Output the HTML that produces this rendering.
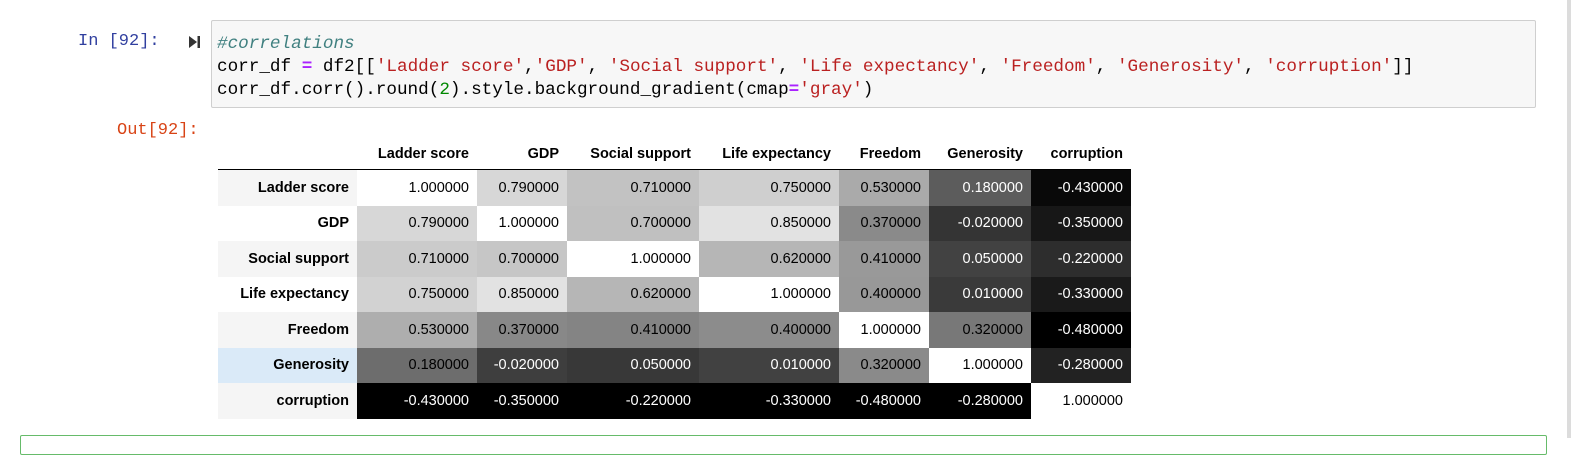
<!DOCTYPE html>
<html><head><meta charset="utf-8"><style>
body{margin:0;width:1571px;height:438px;overflow:hidden;background:#fff;position:relative;font-family:"Liberation Sans",Arial,sans-serif;}
.pr{position:absolute;font-family:"Liberation Mono",monospace;font-size:17px;}
.code{position:absolute;left:211px;top:20px;width:1325px;height:88px;background:#f7f7f7;border:1px solid #cfcfcf;border-radius:2px;box-sizing:border-box;}
.code pre{margin:0;position:absolute;left:5px;top:12px;font-family:"Liberation Mono",monospace;font-size:17.65px;line-height:23px;color:#000;letter-spacing:0}
.cm{color:#408080;font-style:italic}.s{color:#ba2121}.o{color:#aa22ff;font-weight:bold}.n{color:#080}
table{position:absolute;left:218px;top:138px;border-collapse:collapse;font-size:14.5px;}
th,td{padding:0 8px 0 0;text-align:right;height:35.5px;white-space:nowrap}
thead th{height:31px;border-bottom:1px solid #000;font-weight:bold;vertical-align:middle}
tbody th{font-weight:bold}
tr.odd th{background:#f5f5f5}
tr.hv th{background:#daeaf8}
.w{color:#fff}
</style></head><body>
<div class="pr" style="left:78px;top:32px;color:#303f9f">In [92]:</div>
<svg style="position:absolute;left:188px;top:35px" width="14" height="14"><path d="M1 1 L9 7 L1 13 Z" fill="#333"/><rect x="9.5" y="1" width="2.5" height="12" fill="#333"/></svg>
<div class="code"><pre><span class="cm">#correlations</span>
corr_df <span class="o">=</span> df2[[<span class="s">'Ladder score'</span>,<span class="s">'GDP'</span>, <span class="s">'Social support'</span>, <span class="s">'Life expectancy'</span>, <span class="s">'Freedom'</span>, <span class="s">'Generosity'</span>, <span class="s">'corruption'</span>]]
corr_df.corr().round(<span class="n">2</span>).style.background_gradient(cmap<span class="o">=</span><span class="s">'gray'</span>)</pre></div>
<div class="pr" style="left:117px;top:121px;color:#d84315">Out[92]:</div>
<table>
<colgroup><col style="width:139px"><col style="width:120px"><col style="width:90px"><col style="width:132px"><col style="width:140px"><col style="width:90px"><col style="width:102px"><col style="width:100px"></colgroup>
<thead><tr><th></th><th>Ladder score</th><th>GDP</th><th>Social support</th><th>Life expectancy</th><th>Freedom</th><th>Generosity</th><th>corruption</th></tr></thead>
<tbody>
<tr class="odd"><th>Ladder score</th><td style="background:#fff">1.000000</td><td style="background:#d7d7d7">0.790000</td><td style="background:#c2c2c2">0.710000</td><td style="background:#cfcfcf">0.750000</td><td style="background:#aaaaaa">0.530000</td><td class="w" style="background:#5c5c5c">0.180000</td><td class="w" style="background:#090909">-0.430000</td></tr>
<tr><th>GDP</th><td style="background:#d7d7d7">0.790000</td><td style="background:#fff">1.000000</td><td style="background:#c0c0c0">0.700000</td><td style="background:#e2e2e2">0.850000</td><td style="background:#8a8a8a">0.370000</td><td class="w" style="background:#343434">-0.020000</td><td class="w" style="background:#171717">-0.350000</td></tr>
<tr class="odd"><th>Social support</th><td style="background:#cbcbcb">0.710000</td><td style="background:#c6c6c6">0.700000</td><td style="background:#fff">1.000000</td><td style="background:#b6b6b6">0.620000</td><td style="background:#999">0.410000</td><td class="w" style="background:#424242">0.050000</td><td class="w" style="background:#2d2d2d">-0.220000</td></tr>
<tr><th>Life expectancy</th><td style="background:#d2d2d2">0.750000</td><td style="background:#e2e2e2">0.850000</td><td style="background:#b6b6b6">0.620000</td><td style="background:#fff">1.000000</td><td style="background:#989898">0.400000</td><td class="w" style="background:#3a3a3a">0.010000</td><td class="w" style="background:#1a1a1a">-0.330000</td></tr>
<tr class="odd"><th>Freedom</th><td style="background:#aeaeae">0.530000</td><td style="background:#888">0.370000</td><td style="background:#848484">0.410000</td><td style="background:#8c8c8c">0.400000</td><td style="background:#fff">1.000000</td><td style="background:#787878">0.320000</td><td class="w" style="background:#000">-0.480000</td></tr>
<tr class="hv"><th>Generosity</th><td style="background:#6d6d6d">0.180000</td><td class="w" style="background:#3e3e3e">-0.020000</td><td class="w" style="background:#383838">0.050000</td><td class="w" style="background:#414141">0.010000</td><td style="background:#8a8a8a">0.320000</td><td style="background:#fff">1.000000</td><td class="w" style="background:#222">-0.280000</td></tr>
<tr class="odd"><th>corruption</th><td class="w" style="background:#000">-0.430000</td><td class="w" style="background:#000">-0.350000</td><td class="w" style="background:#000">-0.220000</td><td class="w" style="background:#000">-0.330000</td><td class="w" style="background:#000">-0.480000</td><td class="w" style="background:#000">-0.280000</td><td style="background:#fff">1.000000</td></tr>
</tbody></table>
<div style="position:absolute;left:20px;top:435px;width:1527px;height:20px;border:1px solid #66bb6a;border-radius:2px;box-sizing:border-box"></div>
<div style="position:absolute;left:1567px;top:0;width:4px;height:438px;background:#dcdcdc"></div>
</body></html>
